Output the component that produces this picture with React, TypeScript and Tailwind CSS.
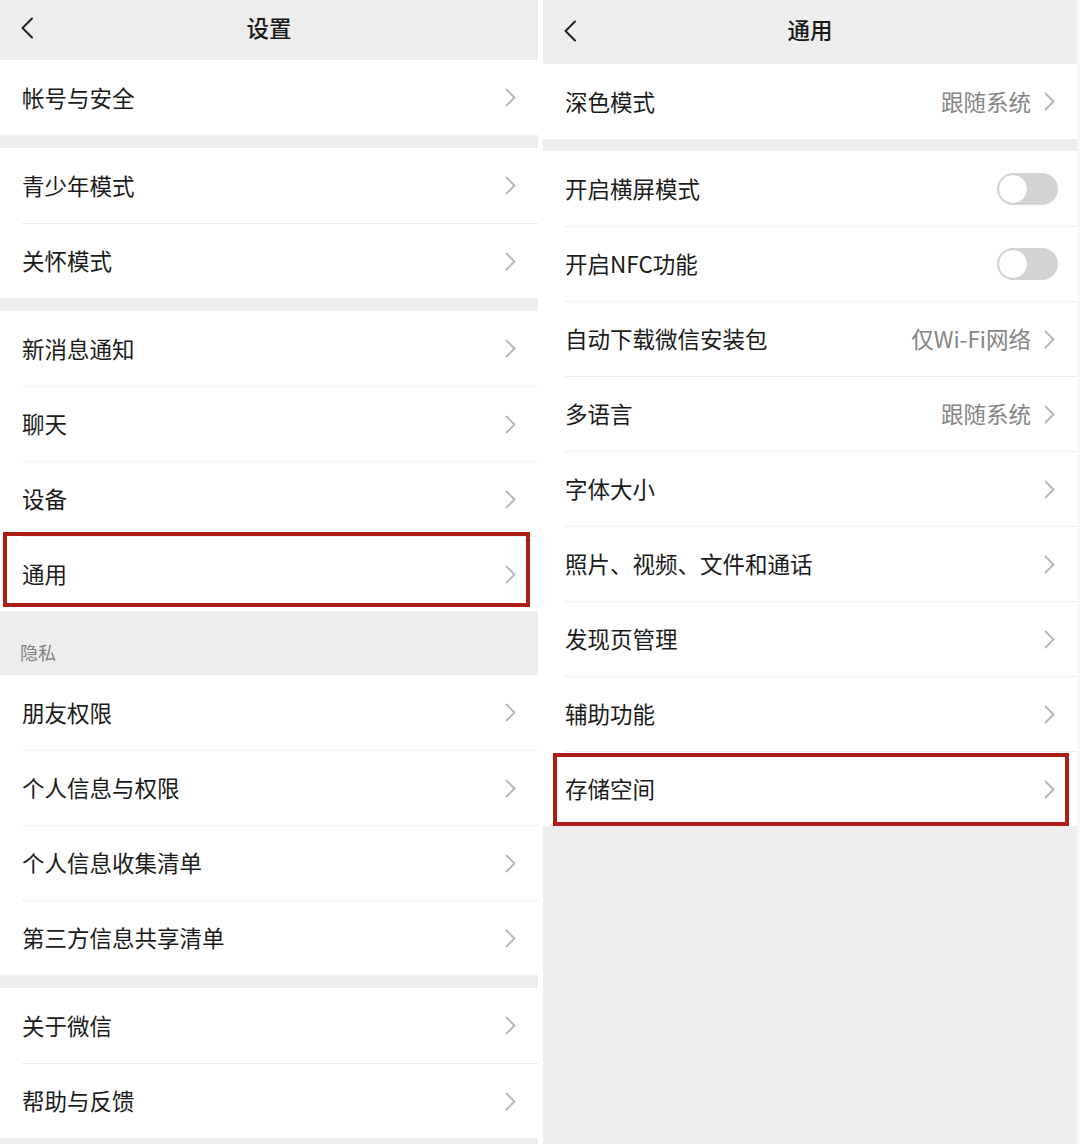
import React from "react";

type Row = {
  label: string;
  value?: string;
  toggle?: boolean;
  boxed?: boolean;
};

const font = { fontFamily: '"Noto Sans CJK SC", "Noto Sans", sans-serif' };

function BackIcon() {
  return (
    <svg width="14" height="22" viewBox="0 0 14 22" fill="none">
      <path d="M12 1.5 L2.5 11 L12 20.5" stroke="#1f1f1f" strokeWidth="2" strokeLinecap="round" strokeLinejoin="round" />
    </svg>
  );
}

function Chevron() {
  return (
    <svg width="11" height="19" viewBox="0 0 11 19" fill="none">
      <path d="M1.5 1.5 L9.5 9.5 L1.5 17.5" stroke="#b5b5b5" strokeWidth="1.8" strokeLinecap="round" strokeLinejoin="round" />
    </svg>
  );
}

function Toggle() {
  return (
    <div className="flex h-[32px] w-[61px] items-center rounded-full bg-[#d3d3d3] p-[1px]">
      <div className="h-[30px] w-[30px] rounded-full border border-[#cfcfcf] bg-white" />
    </div>
  );
}

function Header({ title, height, back }: { title: string; height: string; back: string }) {
  return (
    <div className={`relative flex items-center justify-center bg-[#ededed] pb-[5px] ${height}`}>
      <div className={`absolute left-[20px] ${back}`}>
        <BackIcon />
      </div>
      <span className="text-[22.5px] font-medium text-[#191919]">{title}</span>
    </div>
  );
}

function Group({ rows, box }: { rows: Row[]; box?: string }) {
  return (
    <div className="bg-white">
      {rows.map((r, i) => (
        <div key={r.label} className="relative h-[75px] pl-[22px]">
          <div
            className={`flex h-full items-center pr-[22px] ${i > 0 ? "border-t border-[#ececec]" : ""}`}
          >
            <span className="flex-1 text-[22.5px] text-[#1a1a1a]">{r.label}</span>
            {r.value && <span className="mr-[13px] text-[22.5px] text-[#858585]">{r.value}</span>}
            {r.toggle ? (
              <div className="-mr-[3px]">
                <Toggle />
              </div>
            ) : (
              <Chevron />
            )}
          </div>
          {r.boxed && <div className={`absolute border-[4px] border-[#ad1f16] ${box}`} />}
        </div>
      ))}
    </div>
  );
}

export default function App() {
  return (
    <div className="flex h-[1144px] w-[1080px] bg-white" style={font}>
      {/* left: 设置 */}
      <div className="flex w-[538px] flex-col bg-[#ededed]">
        <Header title="设置" height="h-[60px]" back="top-[17px]" />
        <Group rows={[{ label: "帐号与安全" }]} />
        <div className="h-[13px]" />
        <Group rows={[{ label: "青少年模式" }, { label: "关怀模式" }]} />
        <div className="h-[13px]" />
        <Group
          box="left-[3px] top-[-4px] h-[75px] w-[527px]"
          rows={[{ label: "新消息通知" }, { label: "聊天" }, { label: "设备" }, { label: "通用", boxed: true }]}
        />
        <div className="flex h-[64px] items-center pl-[20px] pt-[18px] text-[18px] text-[#808080]">隐私</div>
        <Group
          rows={[
            { label: "朋友权限" },
            { label: "个人信息与权限" },
            { label: "个人信息收集清单" },
            { label: "第三方信息共享清单" },
          ]}
        />
        <div className="h-[13px]" />
        <Group rows={[{ label: "关于微信" }, { label: "帮助与反馈" }]} />
      </div>

      <div className="w-[5px] bg-white" />

      {/* right: 通用 */}
      <div className="flex w-[534px] flex-col bg-[#ededed]">
        <Header title="通用" height="h-[64px]" back="top-[20px]" />
        <Group rows={[{ label: "深色模式", value: "跟随系统" }]} />
        <div className="h-[12px]" />
        <Group
          box="left-[10px] top-[2px] h-[73px] w-[516px]"
          rows={[
            { label: "开启横屏模式", toggle: true },
            { label: "开启NFC功能", toggle: true },
            { label: "自动下载微信安装包", value: "仅Wi-Fi网络" },
            { label: "多语言", value: "跟随系统" },
            { label: "字体大小" },
            { label: "照片、视频、文件和通话" },
            { label: "发现页管理" },
            { label: "辅助功能" },
            { label: "存储空间", boxed: true },
          ]}
        />
      </div>

      <div className="w-[3px] bg-[#f7f7f7]" />
    </div>
  );
}
